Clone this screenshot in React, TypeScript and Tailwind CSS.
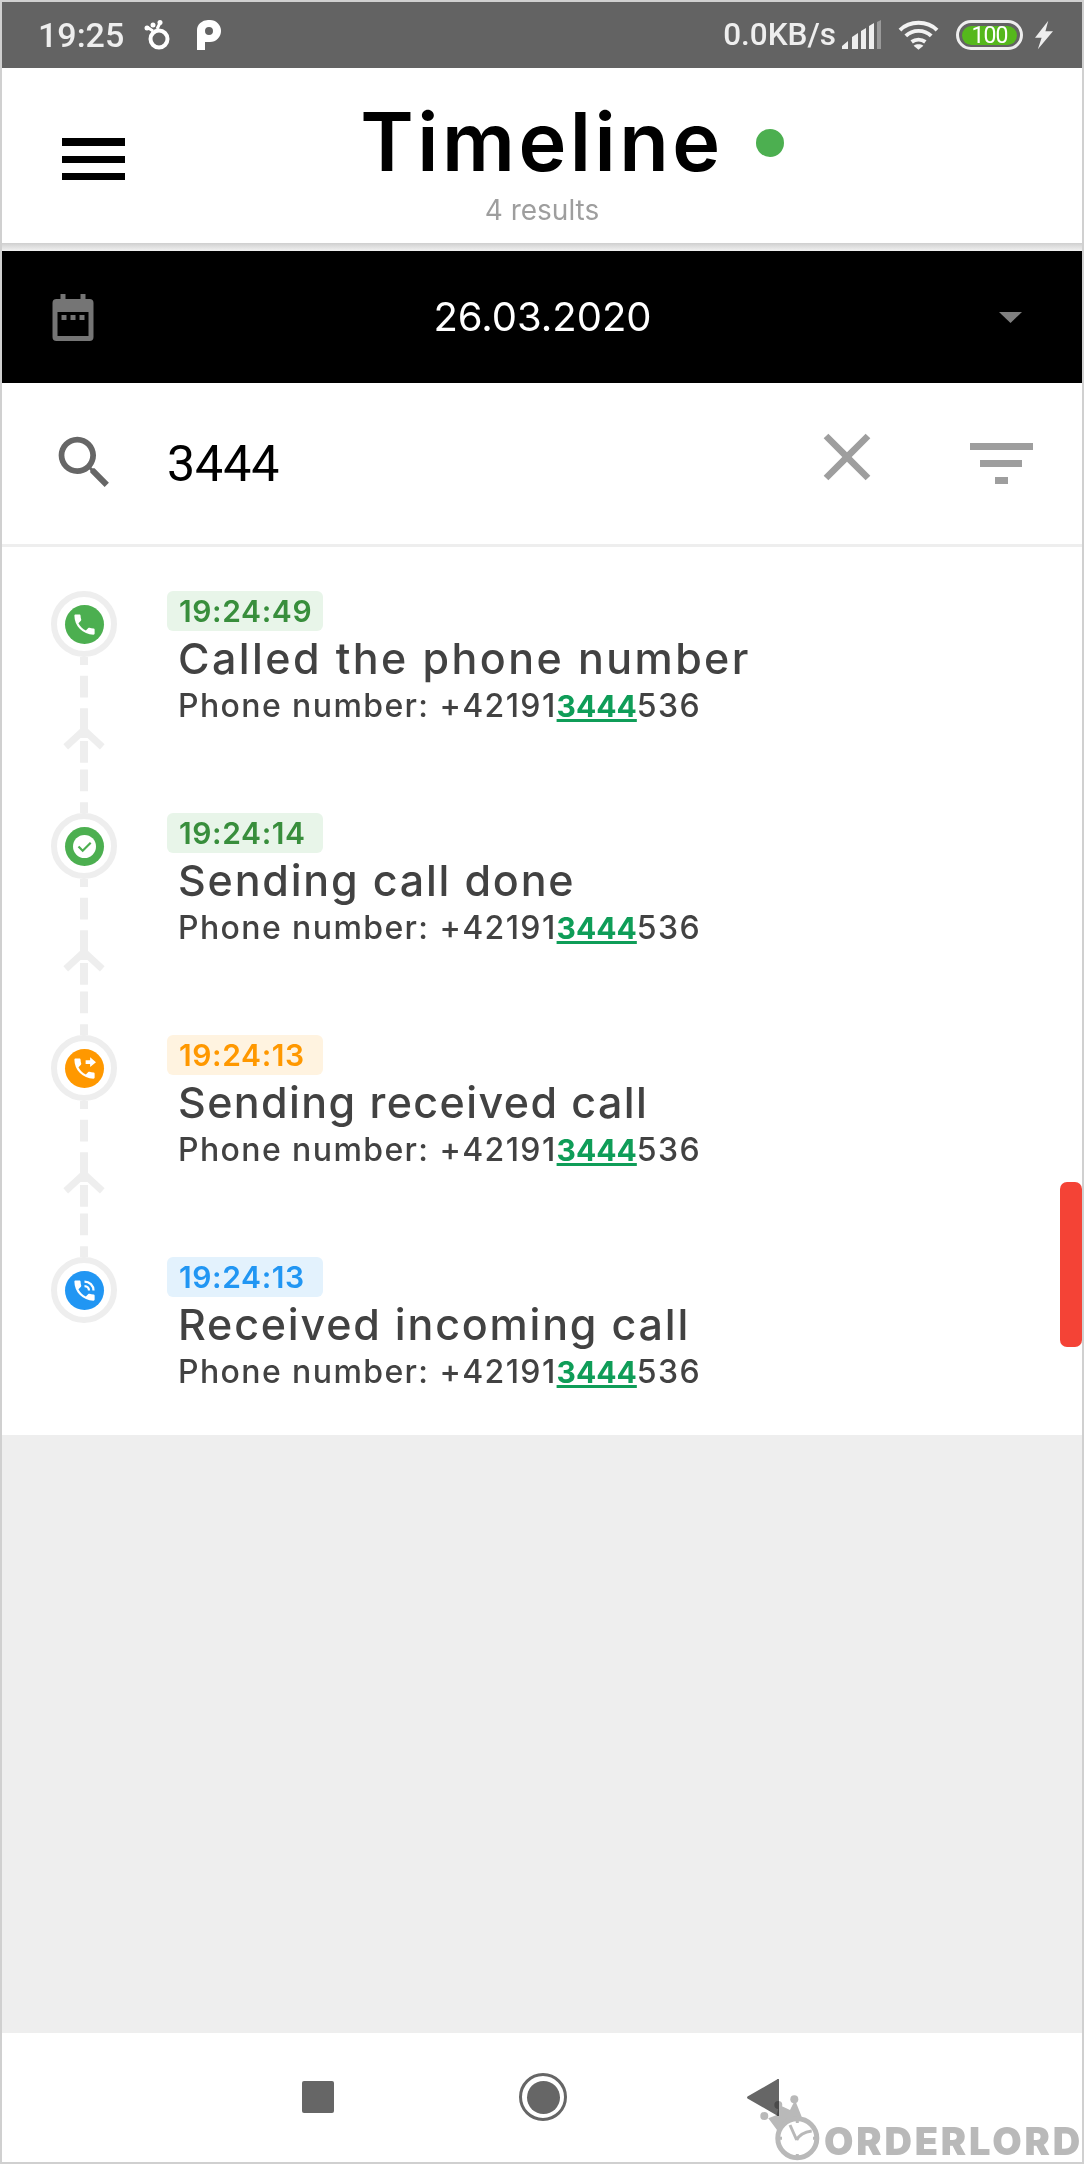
const sans = "font-['Inter','Liberation_Sans',sans-serif]";
const roboto = "font-['Roboto','Liberation_Sans',sans-serif]";

type Row = {
  time: string;
  title: string;
  titleTracking: string;
  badge: string;
  dot: string;
  icon: 'phone' | 'check' | 'forward' | 'ring';
};

const rows: Row[] = [
  { time: '19:24:49', title: 'Called the phone number', titleTracking: 'tracking-[2.4px]', badge: 'bg-[#e8f5e9] text-[#388e3c]', dot: 'bg-[#4caf50]', icon: 'phone' },
  { time: '19:24:14', title: 'Sending call done', titleTracking: 'tracking-[1.8px]', badge: 'bg-[#e8f5e9] text-[#388e3c]', dot: 'bg-[#4caf50]', icon: 'check' },
  { time: '19:24:13', title: 'Sending received call', titleTracking: 'tracking-[1.4px]', badge: 'bg-[#fff3e0] text-[#ff9800]', dot: 'bg-[#ff9800]', icon: 'forward' },
  { time: '19:24:13', title: 'Received incoming call', titleTracking: 'tracking-[1.8px]', badge: 'bg-[#e3f2fd] text-[#2196f3]', dot: 'bg-[#2196f3]', icon: 'ring' },
];

const phonePath =
  'M6.62 10.79c1.44 2.83 3.76 5.14 6.59 6.59l2.2-2.2c.27-.27.67-.36 1.02-.24 1.12.37 2.33.57 3.57.57.55 0 1 .45 1 1V20c0 .55-.45 1-1 1-9.39 0-17-7.61-17-17 0-.55.45-1 1-1h3.5c.55 0 1 .45 1 1 0 1.25.2 2.45.57 3.57.11.35.03.74-.24 1.02l-2.2 2.2z';

function RowIcon({ icon }: { icon: Row['icon'] }) {
  if (icon === 'check') {
    return (
      <svg viewBox="0 0 39 39" className="w-[39px] h-[39px]">
        <circle cx="19.5" cy="19.5" r="11.5" fill="#fff" />
        <path d="M13.5 19.5l4.2 4.2 8-8" fill="none" stroke="#4caf50" strokeWidth="2.2" />
      </svg>
    );
  }
  if (icon === 'phone') {
    return (
      <svg viewBox="0 0 24 24" className="w-[27px] h-[27px]" fill="#fff">
        <path d={phonePath} />
      </svg>
    );
  }
  if (icon === 'forward') {
    return (
      <svg viewBox="0 0 24 24" className="w-[27px] h-[27px]" fill="#fff">
        <path d={phonePath} />
        <path d="M13 4.6h4V2l5.2 4.4L17 10.7V8h-4z" />
      </svg>
    );
  }
  return (
    <svg viewBox="0 0 24 24" className="w-[27px] h-[27px]" fill="#fff">
      <path d={phonePath} />
      <path d="M12 3v2a7 7 0 0 1 7 7h2a9 9 0 0 0-9-9zm0 4v2a3 3 0 0 1 3 3h2a5 5 0 0 0-5-5z" />
    </svg>
  );
}

function Connector() {
  return (
    <svg width="66" height="158" viewBox="0 0 66 158" className="block" fill="none" stroke="#eeeeee" strokeWidth="8">
      <path d="M33 0v8M33 19v22M33 52v30M33 85v22M33 114v22M33 147v11" />
      <path d="M14.5 91L33 74l18.5 17" strokeWidth="7" />
    </svg>
  );
}

function TimelineRow({ row, last }: { row: Row; last: boolean }) {
  return (
    <div className={last ? 'flex h-[178px]' : 'flex h-[222px]'}>
      <div className="w-[66px] shrink-0 flex flex-col">
        <div className="w-[66px] h-[66px] shrink-0 rounded-full border-[6px] border-[#eeeeee] flex items-center justify-center">
          <div className={`w-[39px] h-[39px] rounded-full flex items-center justify-center ${row.dot}`}>
            <RowIcon icon={row.icon} />
          </div>
        </div>
        {!last && <Connector />}
      </div>
      <div className="ml-[50px] flex flex-col items-start">
        <div className={`w-[156px] h-[40px] rounded-[6px] pl-[12px] flex items-center text-[30px] font-semibold leading-none tracking-[0.6px] ${row.badge}`}>
          {row.time}
        </div>
        <div className={`ml-[11px] mt-[1px] text-[43px] leading-[52px] text-[#424242] font-medium whitespace-nowrap ${row.titleTracking}`}>
          {row.title}
        </div>
        <div className="ml-[11px] mt-[3px] text-[32px] leading-[38px] text-[#424242] font-medium tracking-[1.4px] whitespace-nowrap">
          Phone number: +42191
          <span className="text-[30px] font-bold text-[#0f9d58] underline tracking-normal">3444</span>
          536
        </div>
      </div>
    </div>
  );
}

function StatusBar() {
  return (
    <div className={`h-[66px] bg-[#636363] flex items-center text-[#eeeeee] ${roboto}`}>
      <span className="ml-[36px] text-[34px] font-medium leading-none">19:25</span>
      <svg width="26" height="30" viewBox="0 0 26 30" className="ml-[20px]" fill="none">
        <circle cx="15" cy="19" r="8.5" stroke="#fff" strokeWidth="4" />
        <path d="M9 11L3 7M13 9l3-6" stroke="#fff" strokeWidth="3" />
        <circle cx="3" cy="8" r="2.5" fill="#fff" />
        <circle cx="9" cy="5" r="2.5" fill="#fff" />
        <circle cx="16" cy="2.5" r="2.5" fill="#fff" />
      </svg>
      <svg width="24" height="30" viewBox="0 0 24 30" className="ml-[27px]">
        <path fillRule="evenodd" fill="#fff" d="M0 10a11 10 0 0 1 11-10h2a11 11 0 0 1 0 22H8v8H0zM12 7a4 4 0 1 0 0 8 4 4 0 0 0 0-8z" />
      </svg>
      <span className="ml-auto text-[31.5px] font-medium leading-none">0.0KB/s</span>
      <svg width="40" height="30" viewBox="0 0 40 30" className="ml-[6px]">
        <path fill="#eeeeee" d="M0 29v-3l6-5v8zM10 29V17l6-4v16zM19 29V11l5-3v21zM27 29V6l5-3v26z" />
        <path fill="#9a9a9a" d="M35 29V2l4-2v29z" />
      </svg>
      <svg width="41" height="32" viewBox="0 0 42 32" className="ml-[16px]" fill="none" stroke="#f2f2f2" strokeWidth="4">
        <path d="M2 11c10-10 28-10 38 0M8 17c7-7 19-7 26 0M14 23c4-3 10-3 14 0" />
        <path d="M21 31l-5-4c3-2 7-2 10 0z" fill="#f2f2f2" stroke="none" />
      </svg>
      <div className="ml-[17px] w-[67px] h-[30px] rounded-full border-[3px] border-[#eeeeee] flex items-center justify-center">
        <div className="w-[55px] h-[19px] rounded-full bg-[#55b81c] flex items-center justify-center text-[23px] leading-none tracking-[-1px] text-white">
          100
        </div>
      </div>
      <svg width="18" height="30" viewBox="0 0 19 30" className="ml-[12px] mr-[29px]">
        <path fill="#eeeeee" d="M14 0L0 18h7L3 30 19 11h-8z" />
      </svg>
    </div>
  );
}

function Watermark() {
  return (
    <>
      <svg width="62" height="66" viewBox="0 0 62 66" className="absolute left-[758px] top-[62px] mix-blend-multiply">
        <path d="M8.3 23.3L18.3 36.7 41.7 21.7 35 5 30 15 19.3 10 16.7 20z" fill="#b9b9b9" />
        <circle cx="4.3" cy="21" r="4" fill="#b9b9b9" />
        <circle cx="18.3" cy="10" r="4" fill="#b9b9b9" />
        <circle cx="34.3" cy="4.3" r="4" fill="#b9b9b9" />
        <circle cx="37.3" cy="43.3" r="19.5" fill="#fff" stroke="#b9b9b9" strokeWidth="5" />
        <path d="M36.7 45L30 30M36.7 45c3-6 8-8 15-9M37.3 24v4M37.3 59v4M18 43.3h4M53 43.3h4" fill="none" stroke="#b9b9b9" strokeWidth="3" />
      </svg>
      <span className="absolute left-[822px] top-[88px] text-[38px] leading-[40px] font-black text-[#b9b9b9] tracking-[2.8px] whitespace-nowrap">
        ORDERLORD
      </span>
    </>
  );
}

export default function App() {
  return (
    <div className={`relative w-[1084px] h-[2164px] border-2 border-[#d0d0d0] bg-[#eeeeee] flex flex-col overflow-hidden ${sans}`}>
      <StatusBar />

      <div className="h-[175px] bg-white flex flex-col items-center relative">
        <svg width="63" height="42" viewBox="0 0 63 42" className="absolute left-[60px] top-[70px]" fill="#000">
          <path d="M0 0h63v8H0zM0 18h63v7H0zM0 35h63v7H0z" />
        </svg>
        <div className="mt-[30px] flex items-center h-[88px] relative">
          <span className="text-[81px] leading-none font-semibold text-black tracking-[3.5px]">Timeline</span>
          <span className="absolute left-[396px] top-[31px] w-[28px] h-[28px] rounded-full bg-[#4caf50]" />
        </div>
        <div className="mt-[9px] text-[28px] leading-[30px] text-[#9e9e9e]">4 results</div>
      </div>
      <div className="h-[8px] bg-gradient-to-b from-[#cfcfcf] to-[#f2f2f2]" />

      <div className="h-[132px] bg-black flex items-center justify-between pl-[50px] pr-[60px]">
        <svg width="42" height="47" viewBox="0 0 41 47">
          <path fillRule="evenodd" fill="#757575" d="M8 0h5v5h15V0h5v5h4a4 4 0 0 1 4 4v34a4 4 0 0 1-4 4H4a4 4 0 0 1-4-4V9a4 4 0 0 1 4-4h4zM5 18v24h31V18z" />
          <path fill="#757575" d="M9 21h5v5H9zM18 21h5v5h-5zM27 21h5v5h-5z" />
        </svg>
        <span className="mr-[8px] text-[40px] leading-none text-white">26.03.2020</span>
        <svg width="23" height="11" viewBox="0 0 23 11">
          <path d="M0 0h23L11.5 11z" fill="#7f7f7f" />
        </svg>
      </div>

      <div className="h-[161px] bg-white flex items-center">
        <svg viewBox="0 0 24 24" className="w-[69px] h-[69px] ml-[48px] mt-[-2px]" fill="#666666">
          <path d="M15.5 14h-.79l-.28-.27C15.41 12.59 16 11.11 16 9.5 16 5.91 13.09 3 9.5 3S3 5.91 3 9.5 5.91 16 9.5 16c1.61 0 3.09-.59 4.23-1.57l.27.28v.79l5 4.99L20.49 19l-4.99-5zm-6 0C7.01 14 5 11.99 5 9.5S7.01 5 9.5 5 14 7.01 14 9.5 11.99 14 9.5 14z" />
        </svg>
        <span className={`ml-[48px] text-[50px] leading-none text-black ${roboto}`}>3444</span>
        <svg viewBox="0 0 24 24" className="w-[80px] h-[80px] ml-auto mt-[-13px]" fill="#9e9e9e">
          <path d="M19 6.41L17.59 5 12 10.59 6.41 5 5 6.41 10.59 12 5 17.59 6.41 19 12 13.41 17.59 19 19 17.59 13.41 12z" />
        </svg>
        <svg width="63" height="41" viewBox="0 0 63 41" className="ml-[83px] mr-[49px]" fill="#9e9e9e">
          <path d="M0 0h63v7H0zM10 17h42v7H10zM25 34h13v7H25z" />
        </svg>
      </div>
      <div className="h-[3px] bg-[#eeeeee]" />

      <div className="bg-white pt-[44px] pl-[49px] relative">
        {rows.map((row, i) => (
          <TimelineRow key={i} row={row} last={i === rows.length - 1} />
        ))}
        <div className="absolute right-0 top-[635px] w-[22px] h-[165px] rounded-[7px] bg-[#f44336]" />
      </div>

      <div className="flex-1" />

      <div className="h-[129px] bg-white flex items-start relative">
        <div className="ml-[300px] mt-[48px] w-[32px] h-[32px] rounded-[2px] bg-[#666666]" />
        <div className="ml-[185px] mt-[40px] w-[48px] h-[48px] rounded-full border-[3px] border-[#666666] flex items-center justify-center">
          <div className="w-[33px] h-[33px] rounded-full bg-[#666666]" />
        </div>
        <svg width="32" height="37" viewBox="0 0 32 37" className="ml-[180px] mt-[46px]">
          <path d="M32 1v35a1 1 0 0 1-2 .5L.5 19.5a1.5 1.5 0 0 1 0-2L30 .5a1 1 0 0 1 2 .5z" fill="#666666" />
        </svg>
        <Watermark />
      </div>
    </div>
  );
}
